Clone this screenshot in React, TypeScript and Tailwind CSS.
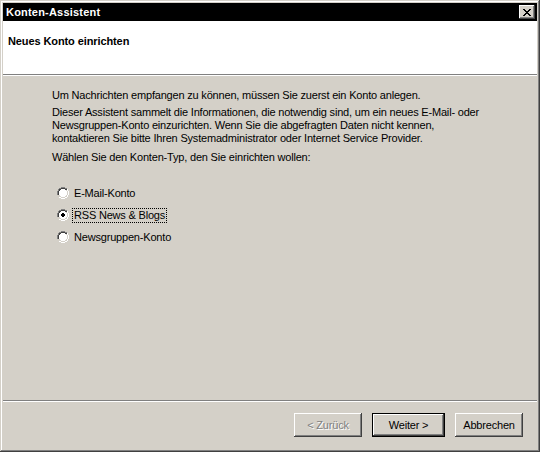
import { useState } from 'react'

const options = ['E-Mail-Konto', 'RSS News & Blogs', 'Newsgruppen-Konto']

function Radio({ checked }: { checked: boolean }) {
  return (
    <svg width="12" height="12" viewBox="0 0 12 12" className="shrink-0">
      <path d="M4 0h4v1H4zM2 1h2v1H2zM8 1h2v1H8zM1 2h1v2H1zM0 4h1v4H0z" fill="#808080" />
      <path d="M4 1h4v1H4zM2 2h2v1H2zM8 2h2v1H8zM2 3h1v1H2zM1 4h1v4H1z" fill="#404040" />
      <path d="M4 2h4v8H4zM3 3h6v6H3zM2 4h8v4H2z" fill="#ffffff" />
      <path d="M10 4h1v4h-1zM9 8h1v1H9zM8 9h1v1H8zM4 10h4v1H4zM3 9h1v1H3zM2 8h1v1H2z" fill="#d4d0c8" />
      <path d="M11 4h1v4h-1zM10 8h1v2h-1zM8 10h2v1H8zM4 11h4v1H4zM2 10h2v1H2zM10 2h1v2h-1z" fill="#ffffff" />
      {checked && <path d="M5 4h2v4H5zM4 5h4v2H4z" fill="#000000" />}
    </svg>
  )
}

function Button({ label, disabled, isDefault }: { label: string; disabled?: boolean; isDefault?: boolean }) {
  return (
    <div
      className={
        isDefault
          ? 'h-[24px] w-[73px] border border-black'
          : 'h-[24px] w-[68px]'
      }
    >
      <div className="flex h-full w-full items-center justify-center bg-[#d4d0c8] shadow-[inset_-1px_-1px_#404040,inset_1px_1px_#ffffff,inset_-2px_-2px_#808080,inset_2px_2px_#d4d0c8]">
        <span
          className={
            disabled
              ? 'text-[11px] text-[#808080] [text-shadow:1px_1px_#ffffff]'
              : 'text-[11px] text-black'
          }
        >
          {label}
        </span>
      </div>
    </div>
  )
}

export default function App() {
  const [selected, setSelected] = useState(1)

  return (
    <div className="flex h-[452px] w-[540px] flex-col bg-[#d4d0c8] p-[3px] font-['Liberation_Sans',Arial,sans-serif] text-[11px] leading-[13px] tracking-[-0.19px] text-black shadow-[inset_-1px_-1px_#404040,inset_1px_1px_#d4d0c8,inset_-2px_-2px_#808080,inset_2px_2px_#ffffff]">
      {/* Title bar */}
      <div className="flex h-[18px] shrink-0 items-center justify-between bg-black pl-[3px] pr-[2px]">
        <span className="text-[11px] font-bold tracking-[0.2px] text-white">Konten-Assistent</span>
        <div className="flex h-[14px] w-[16px] items-center justify-center bg-[#d4d0c8] shadow-[inset_-1px_-1px_#404040,inset_1px_1px_#ffffff,inset_-2px_-2px_#808080,inset_2px_2px_#d4d0c8]">
          <svg width="8" height="7" viewBox="0 0 8 7">
            <path d="M0 0h2v1h1v1h2V1h1V0h2v1H7v1H6v1H5v1h1v1h1v1h1v1H6V6H5V5H3v1H2v1H0V6h1V5h1V4h1V3H2V2H1V1H0z" fill="#000" />
          </svg>
        </div>
      </div>

      {/* Header */}
      <div className="h-[53px] shrink-0 bg-white pl-[5px] pt-[14px]">
        <span className="text-[11px] font-bold tracking-[-0.1px]">Neues Konto einrichten</span>
      </div>
      <div className="h-[2px] shrink-0 border-t border-b border-t-[#808080] border-b-white" />

      {/* Body */}
      <div className="flex flex-1 flex-col pl-[49px] pt-[13px]">
        <p>Um Nachrichten empfangen zu können, müssen Sie zuerst ein Konto anlegen.</p>
        <p className="mt-[4px]">
          Dieser Assistent sammelt die Informationen, die notwendig sind, um ein neues E-Mail- oder
          <br />
          Newsgruppen-Konto einzurichten. Wenn Sie die abgefragten Daten nicht kennen,
          <br />
          kontaktieren Sie bitte Ihren Systemadministrator oder Internet Service Provider.
        </p>
        <p className="mt-[6px]">Wählen Sie den Konten-Typ, den Sie einrichten wollen:</p>

        <div className="mt-[22px] flex flex-col gap-[8px] pl-[5px]">
          {options.map((opt, i) => (
            <div
              key={opt}
              className="flex h-[14px] cursor-default items-center gap-[3px]"
              onClick={() => setSelected(i)}
            >
              <Radio checked={selected === i} />
              <span
                className={
                  selected === i
                    ? 'border border-dotted border-black px-[1px] leading-[13px]'
                    : 'border border-transparent px-[1px] leading-[13px]'
                }
              >
                {opt}
              </span>
            </div>
          ))}
        </div>
      </div>

      {/* Footer */}
      <div className="h-[2px] shrink-0 border-t border-b border-t-[#808080] border-b-white" />
      <div className="flex h-[47px] shrink-0 items-start justify-end gap-[10px] pr-[14px] pt-[11px]">
        <Button label="< Zurück" disabled />
        <Button label="Weiter >" isDefault />
        <Button label="Abbrechen" />
      </div>
    </div>
  )
}
